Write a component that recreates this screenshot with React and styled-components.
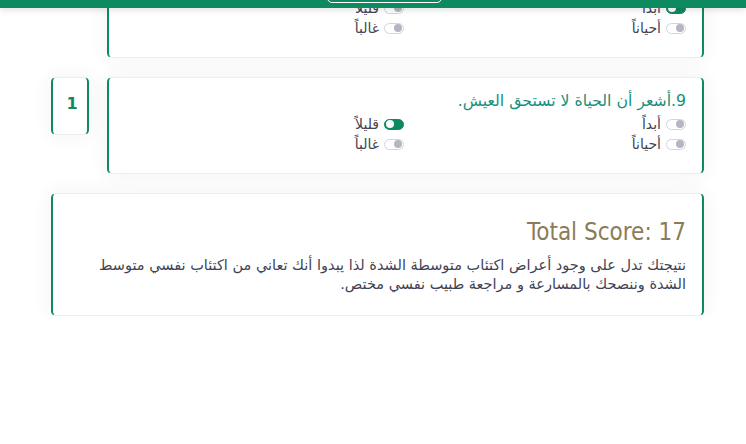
import React from 'react';
import styled, { createGlobalStyle } from 'styled-components';

const GREEN = '#0e8a60';

const questions = [
  {
    id: 8,
    text: 'أشعر بأنني شخص فاشل.',
    answer: 0,
    score: null,
  },
  {
    id: 9,
    text: 'أشعر أن الحياة لا تستحق العيش.',
    answer: 1,
    score: 1,
  },
];

const options = ['أبداً', 'قليلاً', 'أحياناً', 'غالباً'];

const GlobalStyle = createGlobalStyle`
  html, body {
    margin: 0;
    padding: 0;
    background: #ffffff;
  }
  body {
    font-family: "DejaVu Sans", sans-serif;
    color: #3f4254;
    overflow: hidden;
  }
`;

const Header = styled.header`
  position: fixed;
  top: 0;
  left: 0;
  right: 0;
  height: 8px;
  background: ${GREEN};
  box-shadow: 0 2px 6px rgba(0, 0, 0, 0.12);
  display: flex;
  justify-content: center;
  align-items: flex-end;
  overflow: hidden;
  z-index: 10;
`;

const HeaderButton = styled.button`
  width: 115px;
  height: 36px;
  margin: 0 0 5px 23px;
  background: transparent;
  border: 1px solid #ffffff;
  border-radius: 5px;
  flex: none;
`;

const Page = styled.main`
  width: 653px;
  margin: -39px 0 0 51px;
  direction: rtl;
  display: flex;
  flex-direction: column;
  gap: 19px;
`;

const QuestionRow = styled.div`
  display: flex;
  align-items: flex-start;
  gap: 18px;
`;

const Card = styled.section`
  background: #ffffff;
  border: 1px solid #eceef4;
  border-left: 2px solid ${GREEN};
  border-right: 2px solid ${GREEN};
  border-radius: 5px;
  box-shadow: 0 0 20px rgba(82, 63, 105, 0.07);
  box-sizing: border-box;
`;

const QuestionCard = styled(Card)`
  flex: 1;
  height: 97px;
  padding: 12px 16px 0 13px;
`;

const NumberBox = styled(Card)`
  width: 38px;
  height: 58px;
  flex: none;
  display: flex;
  align-items: center;
  justify-content: center;
  padding: 0 0 5px 4px;
  font-weight: bold;
  font-size: 16px;
  color: ${GREEN};
`;

const Spacer = styled.div`
  width: 38px;
  flex: none;
`;

const QuestionText = styled.div`
  font-size: 15.7px;
  line-height: 22px;
  color: #15907a;
  margin-bottom: 2px;
`;

const Options = styled.div`
  display: grid;
  grid-template-columns: 1fr 1fr;
`;

const Option = styled.label`
  display: flex;
  align-items: center;
  gap: 5px;
  height: 20px;
  font-size: 14px;
  color: #3f4254;
`;

const Switch = styled.span`
  width: 20px;
  height: 11px;
  border-radius: 6px;
  box-sizing: border-box;
  border: 1px solid ${(p) => (p.$on ? GREEN : '#d3d4dd')};
  background: ${(p) => (p.$on ? GREEN : '#ffffff')};
  display: flex;
  align-items: center;
  justify-content: ${(p) => (p.$on ? 'flex-end' : 'flex-start')};
  padding: 0 1px;
  flex: none;

  &::after {
    content: '';
    width: 8px;
    height: 8px;
    border-radius: 50%;
    background: ${(p) => (p.$on ? '#ffffff' : '#b5b5c3')};
  }
`;

const ScoreCard = styled(Card)`
  padding: 24px 16px 21px 16px;
`;

const ScoreTitle = styled.h2`
  margin: 0 0 9px 0;
  font-family: "DejaVu Sans Condensed", "DejaVu Sans", sans-serif;
  font-weight: normal;
  font-size: 24px;
  line-height: 29px;
  color: #8c7b57;
  direction: rtl;
  text-align: right;
`;

const ScoreText = styled.p`
  margin: 0;
  font-size: 14.5px;
  line-height: 19px;
  color: #3f4254;
`;

const App = () => {
  return (
    <>
      <GlobalStyle />
      <Header>
        <HeaderButton aria-label="menu" />
      </Header>
      <Page>
        {questions.map((q) => (
          <QuestionRow key={q.id}>
            <QuestionCard>
              <QuestionText>
                {q.id}.{q.text}
              </QuestionText>
              <Options>
                {options.map((o, i) => (
                  <Option key={o}>
                    <Switch $on={i === q.answer} />
                    {o}
                  </Option>
                ))}
              </Options>
            </QuestionCard>
            {q.score !== null ? <NumberBox>{q.score}</NumberBox> : <Spacer />}
          </QuestionRow>
        ))}
        <ScoreCard>
          <ScoreTitle>Total Score: 17</ScoreTitle>
          <ScoreText>
            نتيجتك تدل على وجود أعراض اكتئاب متوسطة الشدة لذا يبدوا أنك تعاني من اكتئاب نفسي متوسط
            الشدة وننصحك بالمسارعة و مراجعة طبيب نفسي مختص.
          </ScoreText>
        </ScoreCard>
      </Page>
    </>
  );
};

export default App;
